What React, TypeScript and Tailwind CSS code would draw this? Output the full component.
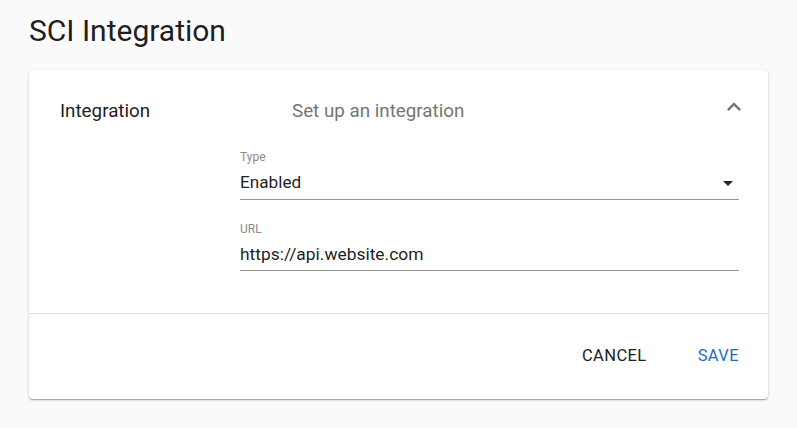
import { useState } from "react";

export default function App() {
  const [url, setUrl] = useState("https://api.website.com");

  return (
    <div className="min-h-screen bg-[#fafafa] px-[29px] pt-[12px] font-['Roboto',sans-serif]">
      <h1 className="text-[30px] leading-[37px] text-black/90">SCI Integration</h1>

      <div className="mt-[21px] bg-white rounded-[4px] shadow-[0_1px_3px_rgba(0,0,0,0.2),0_1px_1px_rgba(0,0,0,0.14),0_2px_1px_-1px_rgba(0,0,0,0.12)]">
        <div className="flex items-center h-[80px] pl-[31px] pr-[20px] pt-[2px]">
          <div className="w-[232px] text-[18.8px] text-black/90">Integration</div>
          <div className="flex-1 text-[18.8px] text-[#757575]">Set up an integration</div>
          <svg viewBox="0 0 24 24" className="w-[28px] h-[28px] fill-[#757575] -mt-[8px]">
            <path d="M7.41 15.41 12 10.83l4.59 4.58L18 14l-6-6-6 6z" />
          </svg>
        </div>

        <div className="pl-[211px] pr-[29px] pb-[42px]">
          <div className="flex flex-col">
            <label className="text-[12px] leading-[14px] text-[#8a8a8a]">Type</label>
            <div className="flex items-center justify-between h-[36px] pt-[3px] border-b border-[#949494]">
              <span className="text-[17.2px] text-black/90">Enabled</span>
              <svg viewBox="0 0 24 24" className="w-[24px] h-[24px] fill-[#222] -mr-[1px]">
                <path d="M7 10l5 5 5-5z" />
              </svg>
            </div>
          </div>

          <div className="flex flex-col mt-[22px]">
            <label className="text-[12px] leading-[14px] text-[#8a8a8a]">URL</label>
            <input
              value={url}
              onChange={(e) => setUrl(e.target.value)}
              className="h-[35px] pt-[2px] border-b border-[#949494] text-[17.4px] text-black/90 outline-none bg-transparent"
            />
          </div>
        </div>

        <div className="border-t border-[#e0e0e0] flex justify-end items-center gap-[51px] h-[86px] pr-[29px] pb-[1px]">
          <button className="text-[16.5px] font-normal tracking-[0.4px] text-[#212121]">CANCEL</button>
          <button className="text-[16.5px] font-normal tracking-[0.4px] text-[#1a6fc0]">SAVE</button>
        </div>
      </div>
    </div>
  );
}
